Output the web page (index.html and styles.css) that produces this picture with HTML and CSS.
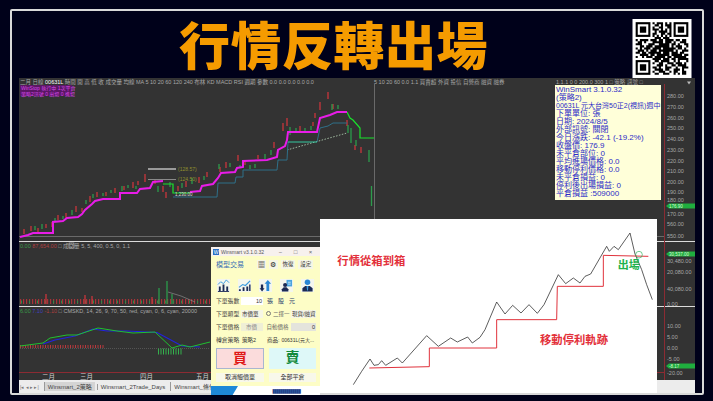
FILE: index.html
```html
<!DOCTYPE html>
<html lang="zh-Hant">
<head>
  <meta charset="UTF-8" />
  <meta name="viewport" content="width=device-width, initial-scale=1" />
  <title>行情反轉出場</title>
  <link rel="stylesheet" href="styles.css">
</head>
<body>
  <div class="frame">
    <div class="head">
      <h1 class="title">行情反轉出場</h1>
      <!-- qr -->
      <svg class="qr" viewBox="-1.5 -1.5 28 28">
        <rect x="-1.5" y="-1.5" width="28" height="28" fill="#fff"/>
        <g fill="none" stroke="#000">
          <rect x="0.5" y="0.5" width="6" height="6"/>
          <rect x="18.5" y="0.5" width="6" height="6"/>
          <rect x="0.5" y="18.5" width="6" height="6"/>
          <path d="M2 3.5h3M20 3.5h3M2 21.5h3" stroke-width="3"/>
          <path d="M8 .5h1m1 0h3m1 0h1m1 0h1M9 1.5h2m1 0h1m1 0h3M8 2.5h1m2 0h2m2 0h2M8 3.5h3m1 0h1m1 0h1m1 0h1M9 4.5h1m1 0h4m1 0h1M8 5.5h2m2 0h2m1 0h2M8 6.5h1m1 0h1m1 0h1m1 0h1m1 0h1M9 7.5h3m1 0h3M0 8.5h1m1 0h4m1 0h3m1 0h2m1 0h4m1 0h2m1 0h2M1 9.5h2m1 0h1m3 0h5m1 0h3m1 0h1m2 0h3M0 10.5h3m3 0h3m2 0h5m1 0h2m1 0h1m2 0h2M2 11.5h2m1 0h3m1 0h7m1 0h1m1 0h3m2 0h1M0 12.5h1m1 0h1m1 0h3m1 0h4m1 0h6m1 0h2m1 0h1M1 13.5h3m1 0h1m1 0h3m1 0h7m1 0h1m2 0h3M0 14.5h2m1 0h2m1 0h6m1 0h3m1 0h3m1 0h2M2 15.5h4m1 0h2m1 0h6m1 0h5m1 0h2M0 16.5h1m2 0h1m1 0h3m1 0h5m1 0h2m1 0h6M8 17.5h4m1 0h3m1 0h2m1 0h5M9 18.5h2m1 0h4m2 0h1m1 0h1m3 0h1M8 19.5h1m2 0h2m2 0h3m1 0h3m1 0h1M10 20.5h3m1 0h1m2 0h2m1 0h4M8 21.5h2m1 0h1m2 0h3m2 0h1m2 0h3M9 22.5h4m1 0h2m2 0h3m1 0h1M8 23.5h1m2 0h3m2 0h1m1 0h2m2 0h2M9 24.5h2m2 0h3m2 0h1m1 0h1m1 0h2"/>
        </g>
      </svg>
    </div>

    <div class="chart">
      <svg class="plot" viewBox="19 78 676 302">
        <!-- panels -->
        <path class="sep" d="M19 236.5h646M374.500 84v152"/>
        <path class="sep-white" d="M19 241.500h676M19 306.500h676"/>
        <path class="red-rule" d="M664.500 84v296M19 372.500h646"/>

        <!-- toolbar text -->
        <text class="tool" x="20" y="83.500">二月 日線 <tspan fill="#fff">00631L</tspan> 時間 開 高 低 收 成交量 均線 MA 5 10 20 60 120 240 布林 KD MACD RSI 週期 參數 0.0 0.0 0.0 0.0 0.0</text>
        <text class="tool" x="374" y="83.500">5 10 20 60 0.0 1.1 買賣超 外資 投信 自營商 融資 融券</text>
        <text class="tool" x="556" y="83.500">1.1.1 0 0 200.0 300 1 □ 策略 訊號 □</text>
        <rect x="20" y="85" width="52" height="11" fill="#5a1763"/>
        <text class="tag" x="21" y="90">WinStop 執行中 1次平倉</text>
        <text class="tag" x="21" y="95.500">策略2訊號 0 出場 0 進場</text>

        <!-- candles -->
        <path class="up" d="M24 229v5M31 226v5M38 228v4M46 224v4M52 222v5M58 215v5M66 213v5M76 206v6M82 208v4M90 196v6M97 192v5M106 192v4M115 188v5M124 186v4M133 182v6M138 181v4M145 174v8M155 180v4M163 186v6M166 192v6M178 186v5M186 181v6M199 177v6M207 172v5M220 167v5M226 162v6M238 155v6M245 161v4M258 155v4M274 142v6M283 123v8M287 118v8M300 126v6M313 122v4M315 113v5M320 102v8M328 92v7M333 104v5M347 120v6M355 145v5M361 147v6"/>
        <path class="down" d="M35 226v4M42 224v5M55 218v4M63 216v3M72 210v5M86 200v4M93 194v4M103 193v3M111 190v3M122 186v5M128 185v3M136 186v3M158 186v6M170 182v5M182 183v5M192 178v6M204 176v4M219 164v5M230 163v4M240 165v3M250 165v4M255 164v4M265 154v5M271 150v5M290 127v8M296 128v5M305 128v4M311 126v4M332 104v6M338 105v4M348 125v8M351 128v15M356 140v6M369 150v12M371.500 186v20"/>

        <!-- stop lines -->
        <path class="ma" d="M287 150L347 133"/>
        <path class="trail-blue" d="M173 197H217L218 183H235L236 177H243V170H277L278 160H287L288 142M317 142L320 128L328 126L333 123H347"/>
        <path class="trail-teal" d="M288 142H317"/>
        <path class="trail-green" d="M163 184H173V193H190M347 112L350 118L353 120L360 128V138H374"/>
        <path class="trail" d="M20 237L28 235L33 233H53V222L63 221L67 218L78 217L82 214L85 210L92 204L95 201L103 199H120V193H137L140 189L150 188L153 182L163 181M190 192L200 191L202 186L213 184L218 178L221 173L235 172L237 168L243 167V161L267 160L277 157L278 150L285 146L287 140L288 132H317L320 118L330 115L337 112H347"/>

        <!-- target marks -->
        <path d="M148 169H176" stroke="#9a9a9a" stroke-width="2"/>
        <path d="M148 179.500H176" stroke="#8a8a8a"/>
        <text class="mark" x="178" y="171">(128.57)</text>
        <text class="mark" x="178" y="181">(124.50)</text>
        <text class="mark-w" x="175" y="196">1,230.00</text>

        <!-- volume panel -->
        <rect x="69" y="243" width="5" height="5" fill="none" stroke="#ddd" stroke-width=".6"/>
        <text class="tool" x="20" y="247.500"><tspan fill="#3a9a4a">0.00</tspan> <tspan fill="#b04040">87,654.00</tspan> □ 成交量 5, 5, 400, 0.5, 0, 1.1</text>
        <path class="vol-red" d="M20 301.500H210"/>
        <path class="vol-green" d="M21 302H210"/>
        <path class="up" d="M46 294v10M85 295v9M92 296v8M152 297v7"/>
        <path class="down" d="M159 288v16M167 281v23M172 294v10"/>
        <path d="M168 292L181 296L195 302" stroke="#999" stroke-width=".6" fill="none"/>

        <!-- macd panel -->
        <text class="tool" x="20" y="313"><tspan fill="#3a9a4a">6.00</tspan> <tspan fill="#4040c0">7.10</tspan> <tspan fill="#b04040">-1.10</tspan> □ CMSKD, 14, 26, 9, 70, 50, red, cyan, 0, 6, cyan, 20000</text>
        <path d="M20 348.500H210" stroke="#777" stroke-width=".5" stroke-dasharray="1 1"/>
        <path class="macd-red" d="M20 346.500H105"/>
        <path class="macd-green" d="M158 351.500H183"/>
        <path class="macd-blue" d="M43 344L55 340L75 336L93 329L107 331L127 331L157 332.500L182 346L200 347"/>
        <path class="macd-line" d="M20 346L43 343L50 338L67 335L77 335L98 328L117 331L133 333L155 332L172 348L182 345L190 347L210 342"/>

        <!-- x axis -->
        <text class="month" x="42" y="379">二月</text>
        <text class="month" x="80" y="379">三月</text>
        <text class="month" x="140" y="379">四月</text>
        <text class="month" x="196" y="379">五月</text>

        <!-- price axis -->
        <path d="M687 81.500l4 0-2 3z" fill="#bbb"/>
        <g class="price">
          <text x="667" y="98">280.00</text>
          <text x="667" y="109">270.00</text>
          <text x="667" y="120">260.00</text>
          <text x="667" y="130">250.00</text>
          <text x="667" y="141">240.00</text>
          <text x="667" y="152">230.00</text>
          <text x="667" y="163">220.00</text>
          <text x="667" y="173">210.00</text>
          <text x="667" y="184">200.00</text>
          <text x="667" y="194">190.00</text>
          <text x="667" y="202">180.00</text>
          <text x="667" y="216">170.00</text>
          <text x="667" y="226">560.00</text>
          <text x="667" y="238">550.00</text>
          <text x="667" y="263">30,480.00</text>
          <text x="667" y="274">20,080.00</text>
          <text x="667" y="291">40,080.00</text>
          <text x="667" y="306">0.00</text>
          <text x="667" y="328">10.00</text>
          <text x="667" y="339">5.00</text>
          <text x="667" y="350">0.00</text>
          <text x="667" y="361">-5.00</text>
          <text x="667" y="375">-20.00</text>
        </g>
        <path d="M669 203.500h26v5h-26l-3-2.500zM669 251.500h26v5h-26l-3-2.500zM669 363.500h26v5h-26l-3-2.500z" fill="#1fae3e"/>
        <text class="pill" x="669" y="207.800">176.90</text>
        <text class="pill" x="669" y="255.800">30,537.00</text>
        <text class="pill" x="669" y="367.800">-8.17</text>
      </svg>

      <div class="tabs">
        <span class="tabs-nav">|◂ ◂ ▸ ▸|</span>
        <span class="tab tab-on">Winsmart_2策略</span>
        <span class="tab">Winsmart_2Trade_Days</span>
        <span class="tab">Winsmart_條件選股</span>
        <span class="tab">Winsmart_報表</span>
      </div>

      <!-- info box -->
      <div class="info">
        <div>WinSmart 3.1.0.32</div>
        <div>(策略2)</div>
        <div class="info-long">00631L 元大台灣50正2(視訊)週中</div>
        <div>下單單位: 張</div>
        <div>日期: 2024/8/5</div>
        <div>外部訊號: 關閉</div>
        <div>今日漲跌: -42.1 (-19.2%)</div>
        <div>收盤價: 176.9</div>
        <div>未平倉部位: 0</div>
        <div>平均進場價格: 0.0</div>
        <div>移動停利價格: 0.0</div>
        <div>未平倉損益: 0</div>
        <div>停利後出場損益: 0</div>
        <div>平倉損益 :509000</div>
      </div>

      <!-- order window -->
      <div class="order">
        <div class="order-bar">
          <span class="order-logo">W</span>
          <span class="order-name">Winsmart v3.1.0.32</span>
          <span class="order-ctl">−</span>
          <span class="order-ctl">□</span>
          <span class="order-ctl">×</span>
        </div>
        <div class="order-body">
          <div class="row row-top">
            <span class="model">模型交易</span>
            <span class="mini">▦</span>
            <span class="mini">⚙</span>
            <span class="btn-s">恢復</span>
            <span class="btn-s">設定</span>
          </div>
          <div class="row row-icons">
            <svg viewBox="0 0 14 14"><rect width="14" height="14" fill="#f4f6ee"/><path d="M1 13.500h12" stroke="#1b2a55"/><path d="M2 8h2v5H2zM6 6h2v7H6zM10 8h2v5h-2z" fill="#1b2a55"/><path d="M1 6l3-3 3 2 3-4 3 3" fill="none" stroke="#3a9be0"/></svg>
            <svg viewBox="0 0 14 14"><rect width="14" height="14" fill="#f4f6ee"/><path d="M1 11h2v2H1zM5 9h2v4H5zM9 8h2v5H9zM12 6h1.500v7H12z" fill="#1b2a55"/><path d="M1 9l4-3 3 1 5-5" fill="none" stroke="#3a9be0" stroke-width="1.200"/></svg>
            <svg viewBox="0 0 14 14"><rect width="14" height="14" fill="#f4f6ee"/><path d="M2 6h2.500v4H6l-2.700 3.500L.7 10H2z" fill="#1b2a55"/><path d="M9.500 1l3.500 4h-2v8H8V5H6z" fill="#2a86d4"/></svg>
            <svg viewBox="0 0 14 14"><rect width="14" height="14" fill="#f4f6ee"/><rect x="7" y="1" width="6" height="7" fill="#4aa3df"/><path d="M8.500 3.500h3M8.500 5.500h3" stroke="#e6f3fb" stroke-width=".8"/><circle cx="5.500" cy="6.500" r="2.200" fill="#1b2a55"/><path d="M2 13.500V11l2-2h3l2 2v2.500z" fill="#1b2a55"/></svg>
            <svg viewBox="0 0 14 14"><rect width="14" height="14" fill="#f4f6ee"/><circle cx="7" cy="3.500" r="3" fill="#2a86d4"/><path d="M1.500 13.500V10l3-2.500h5l3 2.500v3.500z" fill="#1b2a55"/><path d="M6 7.500h2l-.5 5h-1z" fill="#3a9be0"/></svg>
          </div>
          <div class="row">
            <span class="lbl">下單張數</span>
            <span class="field field-num">10</span>
            <span class="sq">張</span>
            <span class="sq">股</span>
            <span class="sq">元</span>
          </div>
          <div class="row">
            <span class="lbl">下單類型</span>
            <span class="field sel">市價單</span>
            <span class="radio"></span>
            <span class="opt">二擇一</span>
            <span class="field sel sel-wide">現貨/融資</span>
          </div>
          <div class="row">
            <span class="lbl">下單價格</span>
            <span class="field off">市價</span>
            <span class="opt opt-wide">自動價格</span>
            <span class="field field-num field-gray">0</span>
          </div>
          <div class="row">
            <span class="lbl">轉倉策略</span>
            <span class="field sel sel-plain">策略2</span>
            <span class="opt opt-sym">商品:</span>
            <span class="sym">00631L(元大...</span>
          </div>
          <div class="trade">
            <span class="buy">買</span>
            <span class="sell">賣</span>
          </div>
          <div class="trade-sub">
            <span>取消觸價單</span>
            <span>全部平倉</span>
          </div>
        </div>
        <div class="order-foot">
          <span class="foot-blue"></span>
          <span class="foot-text">▮▮▮▮▮▮▮▮▮▮▮▮▮▮</span>
        </div>
      </div>

      <!-- diagram -->
      <div class="sketch">
        <svg viewBox="0 13 1011 528">
          <path class="sk-price" d="M100 510L125 470L150 433L162 452L175 450L185 438L197 452L232 430L247 445L320 363L355 395L392 370L412 382L443 367L457 385L480 368L495 345L530 262L555 298L578 272L603 295L627 270L652 296L672 270L715 180L737 207L760 190L780 205L795 185L812 178L860 95L868 110L882 95L895 105L930 55L945 118L965 165L980 210L997 255"/>
          <path class="sk-stop" d="M148 460L328 456V400H530V315H710L712 215H850V122L985 125"/>
          <circle class="sk-ring" cx="957" cy="120" r="10"/>
          <text class="sk-red" x="52" y="152">行情從箱到箱</text>
          <text class="sk-red" x="660" y="387">移動停利軌跡</text>
          <text class="sk-green" x="893" y="163">出場</text>
        </svg>
      </div>
    </div>
  </div>
</body>
</html>
```

FILE: styles.css
```css
* {
  box-sizing: border-box;
}
body {
  margin: 0;
  width: 713px;
  height: 401px;
  overflow: hidden;
  background-color: #00011a;
  font-family: "Liberation Sans", "Noto Sans CJK TC", sans-serif;
}
.frame {
  width: 694px;
  height: 386px;
  margin: 9px 0 0 10px;
  border: 2px solid #d9d9d9;
  border-radius: 2px;
}
.head {
  display: flex;
  align-items: flex-start;
  height: 67px;
  padding-left: 167px;
}
.title {
  margin: 0;
  font-family: "Noto Sans CJK TC", sans-serif;
  font-size: 51px;
  font-weight: 900;
  line-height: 65px;
  letter-spacing: 0.5px;
  color: #f59b00;
}
.qr {
  width: 60px;
  height: 59px;
  margin: 8px 10px 0 auto;
}

/* chart */
.chart {
  position: relative;
  width: 676px;
  height: 315px;
  margin-left: 7px;
  background-color: #333;
}
.plot {
  display: block;
  width: 676px;
  height: 302px;
  font-family: "Liberation Sans", "Noto Sans CJK TC", sans-serif;
}
.sep {
  stroke: #6a6a6a;
  fill: none;
}
.sep-white {
  stroke: #dcdcdc;
  fill: none;
}
.red-rule {
  stroke: #8c2b33;
  fill: none;
}
.tool {
  font-size: 5.5px;
  fill: #a8a8a8;
}
.tag {
  font-size: 5px;
  fill: #d848e8;
}
.mark {
  font-size: 5px;
  fill: #8f8f2e;
}
.mark-w {
  font-size: 4.500px;
  fill: #ddd;
}
.up, .down {
  fill: none;
  stroke-width: 1.300;
}
.up {
  stroke: #c9363c;
}
.down {
  stroke: #2c9c4c;
}
.ma {
  fill: none;
  stroke: #9fb89f;
  stroke-dasharray: 1.500 1.500;
}
.trail {
  fill: none;
  stroke: #e81ce8;
  stroke-width: 2;
}
.trail-blue {
  fill: none;
  stroke: #2f7089;
}
.trail-teal {
  fill: none;
  stroke: #35c9a0;
}
.trail-green {
  fill: none;
  stroke: #19e32c;
  stroke-width: 1.200;
}
.vol-red {
  fill: none;
  stroke: #a83238;
  stroke-width: 5px;
  stroke-dasharray: 1.200 1.800;
}
.vol-green {
  fill: none;
  stroke: #2c8c48;
  stroke-width: 3px;
  stroke-dasharray: 1 7;
}
.macd-red {
  fill: none;
  stroke: #b8383c;
  stroke-width: 3px;
  stroke-dasharray: 1 1.500;
}
.macd-green {
  fill: none;
  stroke: #34b04c;
  stroke-width: 6px;
  stroke-dasharray: 1 1.500;
}
.macd-blue {
  fill: none;
  stroke: #2222e0;
  stroke-width: 1.200;
}
.macd-line {
  fill: none;
  stroke: #20c030;
  stroke-width: 1;
}
.month {
  font-size: 6.500px;
  fill: #cfcfcf;
}
.price text {
  font-size: 5.500px;
  fill: #a8a8a8;
}
.pill {
  font-size: 4.500px;
  fill: #d8f8d8;
}

/* sheet tabs */
.tabs {
  display: flex;
  align-items: center;
  gap: 2px;
  height: 13px;
  padding-left: 1px;
  background-color: #ececec;
  font-size: 6px;
  color: #444;
  white-space: nowrap;
  overflow: hidden;
}
.tabs-nav {
  margin-right: 3px;
  font-size: 5px;
  color: #777;
}
.tab {
  padding: 0 3px;
  border-left: 1px solid #999;
}
.tab-on {
  background-color: #d4d4d4;
}

/* info box */
.info {
  position: absolute;
  top: 7px;
  left: 536px;
  width: 106px;
  height: 115px;
  padding: 1px 0 0 1px;
  background-color: #ffffd9;
  font-size: 8px;
  line-height: 8px;
  color: #2c2cc8;
  white-space: nowrap;
  overflow: hidden;
}
.info-long {
  font-size: 7px;
}

/* order window */
.order {
  position: absolute;
  top: 169px;
  left: 192px;
  width: 109px;
  height: 148px;
  display: flex;
  flex-direction: column;
  background-color: #fdfdc6;
  color: #333;
  font-size: 6.500px;
}
.order-bar {
  display: flex;
  align-items: center;
  height: 9px;
  margin-top: 0;
  padding: 0 2px;
  background-color: #f7f1ee;
}
.order-logo {
  width: 6px;
  height: 6px;
  margin-right: 2px;
  background-color: #2a6fc4;
  font-size: 5px;
  line-height: 6px;
  text-align: center;
  color: #fff;
}
.order-name {
  flex: 1;
  font-size: 5px;
  color: #555;
}
.order-ctl {
  width: 15px;
  font-size: 6px;
  text-align: center;
  color: #666;
}
.order-body {
  flex: 1;
  padding: 3px 4px 0 5px;
}
.row {
  display: flex;
  align-items: center;
  height: 9px;
  margin-bottom: 4px;
}
.row-top {
  height: 10px;
  margin-bottom: 10px;
}
.row-icons {
  justify-content: space-between;
  height: 13px;
  margin: 0 2px 4px 1px;
}
.row-icons svg {
  width: 13px;
  height: 13px;
}
.model {
  width: 42px;
  font-size: 7px;
  color: #3a6fb4;
}
.mini {
  width: 9px;
  margin-right: 3px;
  background-color: #f6f6e6;
  font-size: 7px;
  line-height: 9px;
  text-align: center;
  color: #222;
}
.btn-s {
  width: 15px;
  margin-right: 3px;
  background-color: #f6f6e6;
  font-size: 5.500px;
  line-height: 9px;
  text-align: center;
}
.lbl {
  width: 25px;
  font-size: 5.800px;
  color: #444;
}
.field {
  width: 22px;
  height: 8px;
  background-color: #fff;
  font-size: 5.500px;
  line-height: 8px;
  padding: 0 1px;
  white-space: nowrap;
  overflow: hidden;
}
.field-num {
  text-align: right;
}
.field-gray {
  width: 25px;
  background-color: #e4e4dc;
}
.sel {
  background-color: #f6f6e6;
}
.sel-wide {
  width: 25px;
  margin-left: auto;
}
.sel-plain {
  background-color: transparent;
}
.off {
  background-color: #efefd6;
  text-align: center;
  color: #888;
}
.sq {
  width: 8px;
  margin-left: 3px;
  font-size: 6px;
  text-align: center;
  color: #2b3f6e;
}
.radio {
  width: 5px;
  height: 5px;
  margin-left: 3px;
  border: 1px solid #777;
  border-radius: 50%;
}
.opt {
  margin-left: 2px;
  font-size: 5.500px;
  color: #666;
}
.opt-wide {
  width: 25px;
  margin-left: 4px;
}
.opt-sym {
  margin-left: 4px;
  color: #333;
}
.sym {
  margin-left: 2px;
  font-size: 5px;
  white-space: nowrap;
}
.trade, .trade-sub {
  display: grid;
  grid-template-columns: 48px 47px;
  column-gap: 5px;
}
.trade {
  height: 20px;
  margin-top: 4px;
}
.buy, .sell {
  font-size: 14px;
  font-weight: bold;
  line-height: 19px;
  text-align: center;
}
.buy {
  background-color: #fbdcdc;
  border: 1px solid #a9b6d0;
  color: #e01818;
}
.sell {
  background-color: #def8f8;
  color: #138a3c;
}
.trade-sub {
  margin-top: 5px;
}
.trade-sub span {
  height: 9px;
  background-color: #f8f8ea;
  font-size: 6px;
  line-height: 9px;
  text-align: center;
}
.order-foot {
  display: flex;
  align-items: center;
  height: 9px;
  background-color: #fff;
  overflow: hidden;
}
.foot-blue {
  flex: none;
  width: 27px;
  height: 9px;
  background-color: #1e88d8;
  clip-path: polygon(0 0, 100% 0, 80% 100%, 0 100%);
}
.foot-text {
  margin-left: 34px;
  font-size: 6px;
  letter-spacing: -1px;
  white-space: nowrap;
  color: #27408b;
}

/* diagram */
.sketch {
  position: absolute;
  top: 141px;
  left: 301px;
  width: 337px;
  height: 174px;
  background-color: #fff;
}
.sketch svg {
  display: block;
  width: 337px;
  height: 176px;
  font-family: "Noto Sans CJK TC", sans-serif;
}
.sk-price {
  fill: none;
  stroke: #222;
  stroke-width: 2.200;
}
.sk-stop {
  fill: none;
  stroke: #e0323c;
  stroke-width: 3;
}
.sk-ring {
  fill: none;
  stroke: #2fb35a;
  stroke-width: 2;
}
.sk-red {
  font-size: 34px;
  font-weight: 700;
  fill: #e3303a;
}
.sk-green {
  font-size: 33px;
  font-weight: 700;
  fill: #22b24c;
}
```
